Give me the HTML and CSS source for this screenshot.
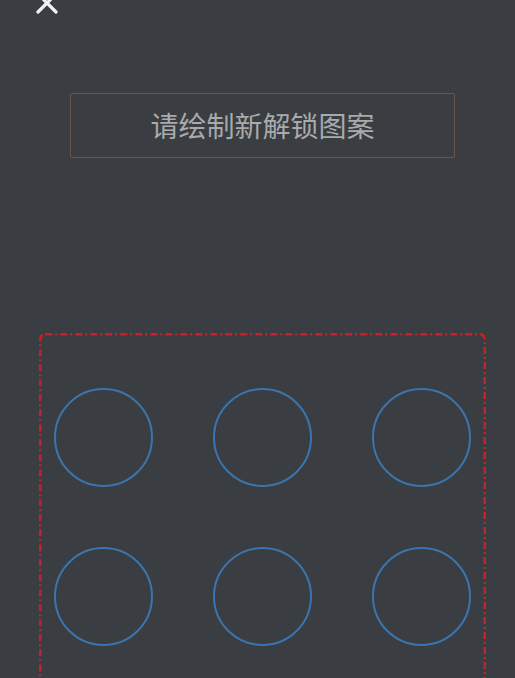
FILE: index.html
```html
<!DOCTYPE html>
<html lang="zh-CN">
<head>
    <meta charset="UTF-8">
    <meta name="viewport" content="width=device-width, initial-scale=1.0">
    <title>设置解锁图案</title>
    <link rel="stylesheet" href="styles.css">
</head>
<body>
    <div class="top-bar">
        <svg class="close" width="24" height="24" viewBox="0 0 24 24">
            <path d="M3 3 L21 21 M21 3 L3 21" stroke="#f2f2f2" stroke-width="3.2" stroke-linecap="round"/>
        </svg>
    </div>

    <div class="hint">请绘制新解锁图案</div>

    <div class="pattern">
        <svg class="pattern-border" width="447" height="400">
            <rect x="1.25" y="1.25" width="444.5" height="420" rx="5" ry="5" fill="none"
                  stroke="#d11c27" stroke-width="2.5" stroke-dasharray="7 3 2 3"/>
        </svg>
        <div class="dot"></div>
        <div class="dot"></div>
        <div class="dot"></div>
        <div class="dot"></div>
        <div class="dot"></div>
        <div class="dot"></div>
    </div>
</body>
</html>
```

FILE: styles.css
```css
body {
    margin: 0;
    background-color: #3a3d41;
    font-family: "Noto Sans CJK SC", "Noto Sans", sans-serif;
    height: 678px;
    overflow: hidden;
}

.top-bar {
    height: 30px;
    padding-left: 35px;
}

.close {
    display: block;
    transform: translateY(-9px);
}

.hint {
    width: 383px;
    height: 63px;
    margin: 63px 0 0 70px;
    border: 1px solid #6d5744;
    border-radius: 2px;
    color: #a8aaac;
    font-size: 28px;
    line-height: 63px;
    text-align: center;
}

.pattern {
    position: relative;
    width: 417px;
    margin: 175px 0 0 39px;
    padding: 55px 15px 0 15px;
    display: grid;
    grid-template-columns: repeat(3, 99px);
    column-gap: 60px;
    row-gap: 60px;
}

.pattern-border {
    position: absolute;
    left: 0;
    top: 0;
    overflow: visible;
}

.dot {
    width: 99px;
    height: 99px;
    box-sizing: border-box;
    border: 2px solid #3a75b0;
    border-radius: 50%;
}
```
